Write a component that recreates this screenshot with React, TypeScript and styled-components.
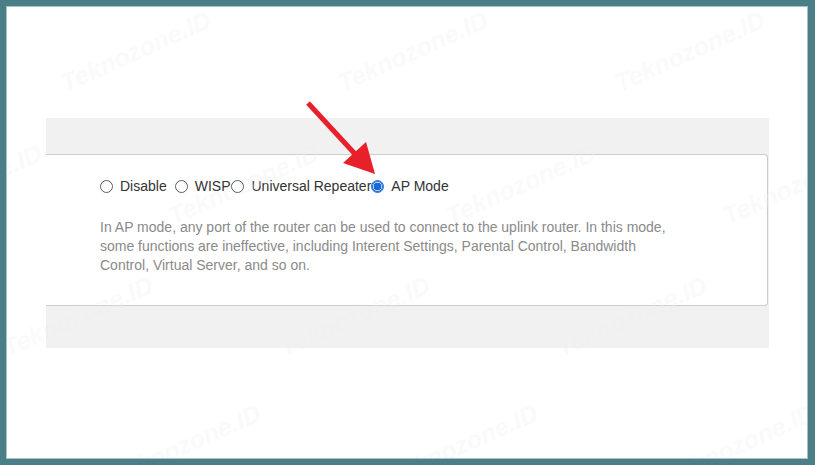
import React from "react";
import styled, { createGlobalStyle } from "styled-components";

const Global = createGlobalStyle`
  html, body { margin: 0; padding: 0; }
  body {
    background: #4b7f87;
    font-family: "Liberation Sans", Arial, sans-serif;
    width: 815px;
    height: 465px;
    overflow: hidden;
  }
  #root { height: 465px; }
`;

const Frame = styled.div`
  box-sizing: border-box;
  height: 465px;
  padding: 6px 7px 6px 6px;
`;

const Sheet = styled.div`
  position: relative;
  box-sizing: border-box;
  height: 100%;
  background: #ffffff;
  border: 1px solid #a6c3c7;
  padding: 111px 38px 0 39px;
  overflow: hidden;
`;

const Panel = styled.section`
  background: #f1f1f1;
  padding: 36px 1px 42px 0;
`;

const Card = styled.div`
  background: #ffffff;
  border: 1px solid #cccccc;
  border-left: none;
  border-radius: 0 4px 4px 0;
  padding: 23px 20px 30px 54px;
`;

const Options = styled.div`
  display: flex;
  align-items: center;
  height: 16px;
`;

const Option = styled.label<{ $gap: number }>`
  display: flex;
  align-items: center;
  gap: 7px;
  margin-right: ${(p) => p.$gap}px;
  font-size: 14px;
  color: #333333;
  white-space: nowrap;
`;

const Radio = styled.span<{ $on?: boolean }>`
  position: relative;
  z-index: 1;
  box-sizing: border-box;
  width: 13px;
  height: 13px;
  border-radius: 50%;
  border: 1px solid ${(p) => (p.$on ? "#1a6ad6" : "#5f5f5f")};
  background: ${(p) => (p.$on ? "radial-gradient(circle, #1a6ad6 0 3.6px, #fff 4.2px)" : "#fff")};
  ${(p) => (p.$on ? "box-shadow: inset 0 0 0 1px #1a6ad6;" : "")}
  flex: none;
`;

const Description = styled.p`
  margin: 24px 0 0 0;
  max-width: 576px;
  font-size: 14px;
  line-height: 19px;
  color: #8a8a8a;
`;

const Watermark = styled.span`
  position: absolute;
  font-family: "Liberation Sans", Arial, sans-serif;
  font-weight: bold;
  font-style: italic;
  font-size: 25px;
  color: rgba(240, 240, 240, 0.32);
  white-space: nowrap;
  transform: rotate(-24deg);
  transform-origin: center;
  pointer-events: none;
`;

const Arrow = styled.svg`
  position: absolute;
  left: 296px;
  top: 90px;
  width: 80px;
  height: 84px;
  overflow: visible;
`;

const marks: Array<[number, number]> = [];
const rows: Array<[number, number]> = [
  [45, 48],
  [178, 156],
  [310, -10],
  [438, 98],
];
rows.forEach(([cy, x0]) => {
  for (let x = x0 - 277 * 2; x < 830; x += 277) {
    if (x > -170) marks.push([x, cy]);
  }
});

const options = [
  { label: "Disable", gap: 8 },
  { label: "WISP", gap: 1 },
  { label: "Universal Repeater", gap: 0 },
  { label: "AP Mode", gap: 0, on: true },
];

export default function App() {
  return (
    <>
      <Global />
      <Frame>
        <Sheet>
          <Panel>
            <Card>
              <Options>
                {options.map((o) => (
                  <Option key={o.label} $gap={o.gap}>
                    <Radio $on={o.on} />
                    {o.label}
                  </Option>
                ))}
              </Options>
              <Description>
                In AP mode, any port of the router can be used to connect to the uplink router. In this mode,
                some functions are ineffective, including Interent Settings, Parental Control, Bandwidth
                Control, Virtual Server, and so on.
              </Description>
            </Card>
          </Panel>
          {marks.map(([x, y], i) => (
            <Watermark key={i} style={{ left: x, top: y - 15 }}>
              Teknozone.ID
            </Watermark>
          ))}
          <Arrow viewBox="0 0 80 84">
            <line x1="5" y1="6" x2="52" y2="57" stroke="#e8202a" strokeWidth="5" strokeLinecap="butt" />
            <polygon points="40,66 63,45 72,77" fill="#e8202a" />
          </Arrow>
        </Sheet>
      </Frame>
    </>
  );
}
